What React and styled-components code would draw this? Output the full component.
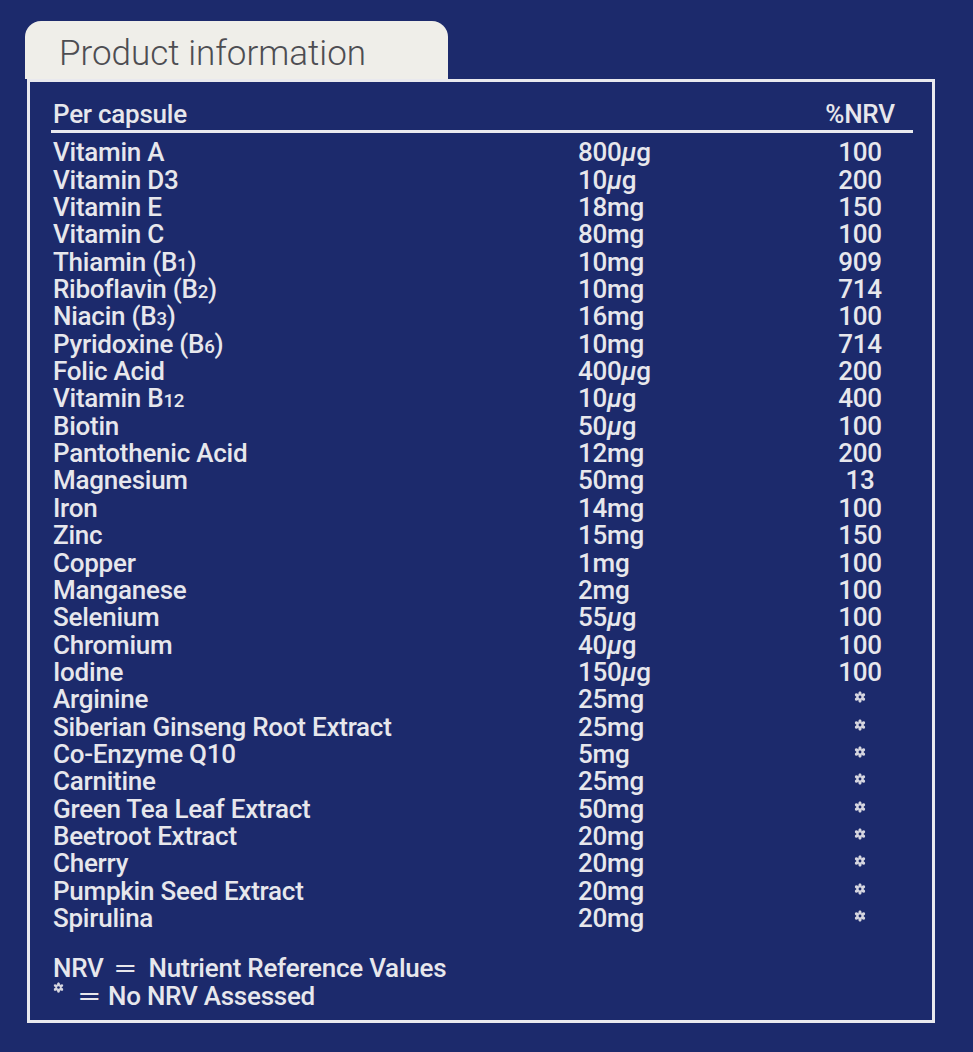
import styled, { createGlobalStyle } from 'styled-components';

const GlobalStyle = createGlobalStyle`
    html, body {
        margin: 0;
        padding: 0;
        background: #1c2a6c;
    }
    body {
        font-family: Roboto, "Liberation Sans", sans-serif;
        color: #e7e7ec;
    }
`

const rows = [
    ['Vitamin A', '800', 'ug', '100'],
    ['Vitamin D3', '10', 'ug', '200'],
    ['Vitamin E', '18mg', null, '150'],
    ['Vitamin C', '80mg', null, '100'],
    [['Thiamin (B', '1', ')'], '10mg', null, '909'],
    [['Riboflavin (B', '2', ')'], '10mg', null, '714'],
    [['Niacin (B', '3', ')'], '16mg', null, '100'],
    [['Pyridoxine (B', '6', ')'], '10mg', null, '714'],
    ['Folic Acid', '400', 'ug', '200'],
    [['Vitamin B', '12', ''], '10', 'ug', '400'],
    ['Biotin', '50', 'ug', '100'],
    ['Pantothenic Acid', '12mg', null, '200'],
    ['Magnesium', '50mg', null, '13'],
    ['Iron', '14mg', null, '100'],
    ['Zinc', '15mg', null, '150'],
    ['Copper', '1mg', null, '100'],
    ['Manganese', '2mg', null, '100'],
    ['Selenium', '55', 'ug', '100'],
    ['Chromium', '40', 'ug', '100'],
    ['Iodine', '150', 'ug', '100'],
    ['Arginine', '25mg', null, '*'],
    ['Siberian Ginseng Root Extract', '25mg', null, '*'],
    ['Co-Enzyme Q10', '5mg', null, '*'],
    ['Carnitine', '25mg', null, '*'],
    ['Green Tea Leaf Extract', '50mg', null, '*'],
    ['Beetroot Extract', '20mg', null, '*'],
    ['Cherry', '20mg', null, '*'],
    ['Pumpkin Seed Extract', '20mg', null, '*'],
    ['Spirulina', '20mg', null, '*'],
]

const Star = ({ size = 12 }) => (
    <StarSvg width={size} height={size} viewBox="0 0 20 20">
        {[0, 60, 120, 180, 240, 300].map(a => (
            <ellipse
                key={a}
                cx="10"
                cy="5"
                rx="2.8"
                ry="4.7"
                fill="#d6d6e0"
                transform={`rotate(${a} 10 10)`}
            />
        ))}
        <circle cx="10" cy="10" r="2.4" fill="#1c2a6c" />
    </StarSvg>
)

const Name = ({ value }) => {
    if (typeof value === 'string') return value;
    const [before, sub, after] = value;
    return (
        <>
            {before}<Sub>{sub}</Sub>{after}
        </>
    )
}

const App = () => {
    return (
        <Page>
            <GlobalStyle />
            <Tab>Product information</Tab>
            <Panel>
                <HeadRow>
                    <span>Per capsule</span>
                    <NrvCell>%NRV</NrvCell>
                </HeadRow>
                <Table>
                    {rows.map(([name, amount, unit, nrv], i) => (
                        <Row key={i}>
                            <span><Name value={name} /></span>
                            <span>
                                {amount}
                                {unit && <Mu>μ</Mu>}
                                {unit && 'g'}
                            </span>
                            <NrvCell>{nrv === '*' ? <Star /> : nrv}</NrvCell>
                        </Row>
                    ))}
                </Table>
                <Notes>
                    <div>NRV<Eq>=</Eq>Nutrient Reference Values</div>
                    <div><Star size={11} /><Eq $after={7}>=</Eq>No NRV Assessed</div>
                </Notes>
            </Panel>
        </Page>
    )
}

export default App

const Page = styled.div`
    width: 973px;
    height: 1052px;
    box-sizing: border-box;
    padding: 21px 0 0 25px;
    overflow: hidden;
`
const Tab = styled.div`
    width: 423px;
    height: 58px;
    box-sizing: border-box;
    padding: 13px 0 0 34px;
    background: #efeee9;
    border-radius: 16px 16px 0 0;
    font-size: 35px;
    font-weight: 300;
    line-height: 40px;
    color: #4d4d52;
`
const Panel = styled.div`
    margin-left: 2px;
    width: 908px;
    box-sizing: border-box;
    border: 3px solid #e9e9ee;
    padding-bottom: 10px;
    font-weight: 500;
    letter-spacing: -0.25px;
`
const HeadRow = styled.div`
    display: grid;
    grid-template-columns: 757px 100px;
    margin: 0 19px 0 21px;
    padding: 18.5px 0 2px 2px;
    border-bottom: 3px solid #e9e9ee;
    font-size: 26px;
    line-height: 27.35px;
`
const Table = styled.div`
    padding: 6.5px 0 0 23px;
`
const Row = styled.div`
    display: grid;
    grid-template-columns: 525px 232px 100px;
    height: 27.35px;
    font-size: 26px;
    line-height: 27.35px;
    white-space: nowrap;
`
const NrvCell = styled.span`
    display: flex;
    justify-content: center;
    align-items: flex-start;
`
const StarSvg = styled.svg`
    margin-top: 5px;
    flex-shrink: 0;
`
const Sub = styled.span`
    font-size: 0.72em;
    line-height: 0;
`
const Mu = styled.span`
    font-style: italic;
`
const Eq = styled.span`
    display: inline-block;
    width: 24px;
    margin: 0 ${p => p.$after ?? 12}px 0 9px;
    text-align: center;
    font-weight: 400;
    transform: scaleX(1.7);
`
const Notes = styled.div`
    margin-top: 21.3px;
    padding-left: 23px;
    font-size: 26px;
    line-height: 28px;
    white-space: nowrap;

    svg {
        margin: 0 4px 0 0;
        vertical-align: 12px;
    }
`
